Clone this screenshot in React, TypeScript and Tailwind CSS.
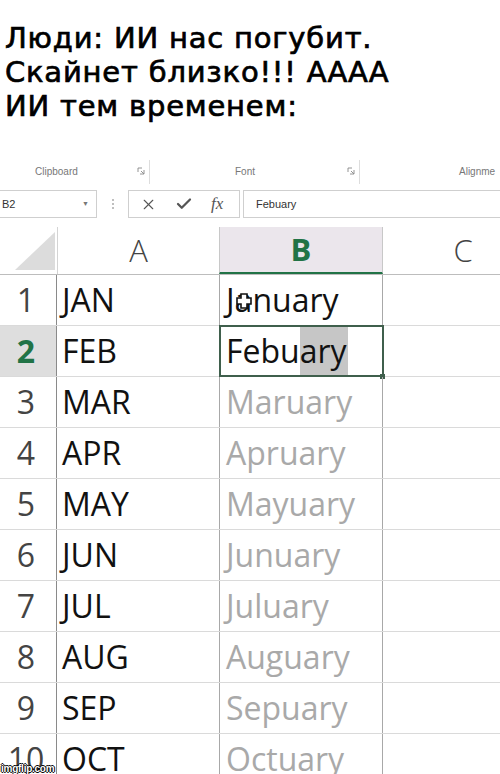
import { X, Check } from 'lucide-react'

const months = [
  { a: 'JAN', b: 'January' },
  { a: 'FEB', b: 'Febuary' },
  { a: 'MAR', b: 'Maruary' },
  { a: 'APR', b: 'Apruary' },
  { a: 'MAY', b: 'Mayuary' },
  { a: 'JUN', b: 'Junuary' },
  { a: 'JUL', b: 'Juluary' },
  { a: 'AUG', b: 'Auguary' },
  { a: 'SEP', b: 'Sepuary' },
  { a: 'OCT', b: 'Octuary' },
]

const Launcher = () => (
  <svg width="8" height="8" viewBox="0 0 8 8" className="text-[#888]">
    <path d="M1 1h4M1 1v4M3 7h4V3M4 4l3 3" stroke="currentColor" strokeWidth="0.9" fill="none" />
  </svg>
)

const App = () => {
  return (
    <div className="relative h-[774px] w-[500px] overflow-hidden bg-white">
      {/* meme caption */}
      <div className="h-[152px] pl-[5px] pt-[21px] font-['DejaVu_Sans',sans-serif] text-[29px] leading-[34px] tracking-[0.8px] text-black [-webkit-text-stroke:0.7px_black]">
        <p>Люди: ИИ нас погубит.</p>
        <p>Скайнет близко!!! АААА</p>
        <p>ИИ тем временем:</p>
      </div>

      {/* ribbon group labels */}
      <div className="flex h-[30px] items-center pt-[8px] font-['Liberation_Sans',sans-serif] text-[10px] text-[#777]">
        <span className="ml-[35px] w-[102px]">Clipboard</span>
        <Launcher />
        <div className="ml-[4px] h-[24px] w-px self-start bg-[#ddd]" />
        <span className="ml-[85px] w-[112px]">Font</span>
        <Launcher />
        <div className="ml-[4px] h-[24px] w-px self-start bg-[#ddd]" />
        <span className="ml-[99px]">Alignme</span>
      </div>

      {/* formula bar */}
      <div className="mt-[8px] flex h-[28px] items-stretch font-['Liberation_Sans',sans-serif] text-[11px] text-[#333]">
        <div className="flex w-[97px] shrink-0 items-center justify-between border border-l-0 border-[#cfcfcf] pl-[2px] pr-[7px]">
          <span>B2</span>
          <span className="text-[7px] text-[#777]">▼</span>
        </div>
        <div className="flex w-[31px] shrink-0 flex-col items-center justify-center gap-[2px]">
          <span className="h-[2px] w-[2px] rounded-full bg-[#aaa]" />
          <span className="h-[2px] w-[2px] rounded-full bg-[#aaa]" />
          <span className="h-[2px] w-[2px] rounded-full bg-[#aaa]" />
        </div>
        <div className="flex w-[112px] shrink-0 items-center gap-[18px] border border-[#cfcfcf] pl-[11px]">
          <X size={17} strokeWidth={1.6} className="text-[#555]" />
          <Check size={18} strokeWidth={3} className="text-[#555]" />
          <span className="font-['Liberation_Serif',serif] text-[17px] italic text-[#555]">fx</span>
        </div>
        <div className="ml-[3px] flex flex-1 items-center border border-r-0 border-[#cfcfcf] pl-[12px]">
          Febuary
        </div>
      </div>

      {/* column headers */}
      <div className="mt-[9px] flex h-[48px] border-b border-[#bdbdbd] font-['Open_Sans',sans-serif] text-[31px] text-[#444]">
        <div className="flex w-[57px] shrink-0 items-end justify-end pb-[4px] pr-[2px]">
          <svg width="40" height="38" viewBox="0 0 40 38">
            <polygon points="40,0 40,38 0,38" fill="#dcdcdc" />
          </svg>
        </div>
        <div className="flex w-[162px] shrink-0 items-center justify-center border-l border-[#d4d4d4] font-light">A</div>
        <div className="flex w-[164px] shrink-0 items-center justify-center border-x border-b-2 border-x-[#c8c8c8] border-b-[#217346] bg-[#ebe6ec] font-bold text-[#217346]">
          B
        </div>
        <div className="flex w-[160px] shrink-0 items-center justify-center font-light">C</div>
      </div>

      {/* rows */}
      {months.map((m, i) => {
        const active = i === 1
        return (
          <div key={m.a} className="flex h-[51px] border-b border-[#dadada] font-['Open_Sans',sans-serif] text-[32px]">
            <div
              className={
                active
                  ? 'flex w-[57px] shrink-0 items-center justify-center border-r border-[#8a8a8a] bg-[#dedede] pr-[4px] font-bold text-[#217346]'
                  : 'flex w-[57px] shrink-0 items-center justify-center border-r border-[#8a8a8a] pr-[4px] text-[#444]'
              }
            >
              {i + 1}
            </div>
            <div className="flex w-[162px] shrink-0 items-center pl-[5px] text-[#111]">{m.a}</div>
            <div className="relative flex w-[164px] shrink-0 items-center border-x border-[#a8a8a8] pl-[6px]">
              {i === 0 && <span className="text-[#111]">{m.b}</span>}
              {active && (
                <>
                  <div className="absolute left-[80px] top-0 h-full w-[48px] bg-[#c6c6c6]" />
                  <span className="relative text-[#111]">{m.b}</span>
                  <div className="absolute -left-px -top-px h-[52px] w-[165px] border-2 border-[#3f5f4c]" />
                  <div className="absolute -bottom-[3px] -right-[3px] h-[5px] w-[5px] bg-[#3f5f4c]" />
                </>
              )}
              {i > 1 && <span className="text-[#a9a9a9]">{m.b}</span>}
              {i === 0 && (
                <svg className="absolute left-[16px] top-[18px]" width="16" height="16" viewBox="0 0 16 16">
                  <path d="M5 1h6v4h4v6h-4v4H5v-4H1V5h4z" fill="#fff" stroke="#111" strokeWidth="1.6" />
                </svg>
              )}
            </div>
            <div className="flex-1" />
          </div>
        )
      })}

      {/* watermark */}
      <div className="absolute bottom-0 left-[1px] font-['Liberation_Sans',sans-serif] text-[10px] font-bold leading-[11px] tracking-tight text-white [text-shadow:1px_0_#000,-1px_0_#000,0_1px_#000,0_-1px_#000]">
        imgflip.com
      </div>
    </div>
  )
}

export default App
